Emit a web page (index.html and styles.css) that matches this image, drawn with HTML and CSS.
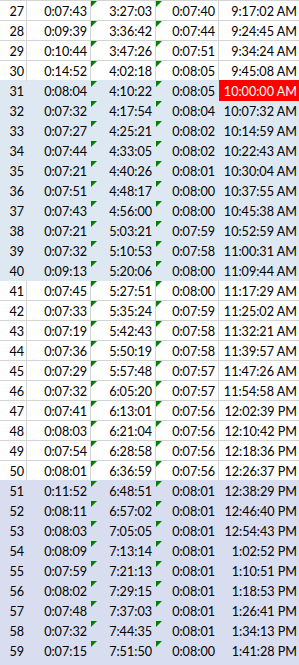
FILE: index.html
```html
<!DOCTYPE html>
<html>
<head>
<meta charset="utf-8">
<link rel="stylesheet" href="styles.css">
</head>
<body>
<div class="sheet">
<div class="row"><div class="c n">27</div><div class="c">0:07:43</div><div class="c f">3:27:03</div><div class="c f">0:07:40</div><div class="c e">9:17:02 AM</div></div>
<div class="row"><div class="c n">28</div><div class="c">0:09:39</div><div class="c f">3:36:42</div><div class="c f">0:07:44</div><div class="c e">9:24:45 AM</div></div>
<div class="row"><div class="c n">29</div><div class="c">0:10:44</div><div class="c f">3:47:26</div><div class="c f">0:07:51</div><div class="c e">9:34:24 AM</div></div>
<div class="row"><div class="c n">30</div><div class="c">0:14:52</div><div class="c f">4:02:18</div><div class="c f">0:08:05</div><div class="c e">9:45:08 AM</div></div>
<div class="row blue"><div class="c n">31</div><div class="c">0:08:04</div><div class="c f">4:10:22</div><div class="c f">0:08:05</div><div class="c e red">10:00:00 AM</div></div>
<div class="row blue"><div class="c n">32</div><div class="c">0:07:32</div><div class="c f">4:17:54</div><div class="c f">0:08:04</div><div class="c e">10:07:32 AM</div></div>
<div class="row blue"><div class="c n">33</div><div class="c">0:07:27</div><div class="c f">4:25:21</div><div class="c f">0:08:02</div><div class="c e">10:14:59 AM</div></div>
<div class="row blue"><div class="c n">34</div><div class="c">0:07:44</div><div class="c f">4:33:05</div><div class="c f">0:08:02</div><div class="c e">10:22:43 AM</div></div>
<div class="row blue"><div class="c n">35</div><div class="c">0:07:21</div><div class="c f">4:40:26</div><div class="c f">0:08:01</div><div class="c e">10:30:04 AM</div></div>
<div class="row blue"><div class="c n">36</div><div class="c">0:07:51</div><div class="c f">4:48:17</div><div class="c f">0:08:00</div><div class="c e">10:37:55 AM</div></div>
<div class="row blue"><div class="c n">37</div><div class="c">0:07:43</div><div class="c f">4:56:00</div><div class="c f">0:08:00</div><div class="c e">10:45:38 AM</div></div>
<div class="row blue"><div class="c n">38</div><div class="c">0:07:21</div><div class="c f">5:03:21</div><div class="c f">0:07:59</div><div class="c e">10:52:59 AM</div></div>
<div class="row blue"><div class="c n">39</div><div class="c">0:07:32</div><div class="c f">5:10:53</div><div class="c f">0:07:58</div><div class="c e">11:00:31 AM</div></div>
<div class="row blue"><div class="c n">40</div><div class="c">0:09:13</div><div class="c f">5:20:06</div><div class="c f">0:08:00</div><div class="c e">11:09:44 AM</div></div>
<div class="row"><div class="c n">41</div><div class="c">0:07:45</div><div class="c f">5:27:51</div><div class="c f">0:08:00</div><div class="c e">11:17:29 AM</div></div>
<div class="row"><div class="c n">42</div><div class="c">0:07:33</div><div class="c f">5:35:24</div><div class="c f">0:07:59</div><div class="c e">11:25:02 AM</div></div>
<div class="row"><div class="c n">43</div><div class="c">0:07:19</div><div class="c f">5:42:43</div><div class="c f">0:07:58</div><div class="c e">11:32:21 AM</div></div>
<div class="row"><div class="c n">44</div><div class="c">0:07:36</div><div class="c f">5:50:19</div><div class="c f">0:07:58</div><div class="c e">11:39:57 AM</div></div>
<div class="row"><div class="c n">45</div><div class="c">0:07:29</div><div class="c f">5:57:48</div><div class="c f">0:07:57</div><div class="c e">11:47:26 AM</div></div>
<div class="row"><div class="c n">46</div><div class="c">0:07:32</div><div class="c f">6:05:20</div><div class="c f">0:07:57</div><div class="c e">11:54:58 AM</div></div>
<div class="row"><div class="c n">47</div><div class="c">0:07:41</div><div class="c f">6:13:01</div><div class="c f">0:07:56</div><div class="c e">12:02:39 PM</div></div>
<div class="row"><div class="c n">48</div><div class="c">0:08:03</div><div class="c f">6:21:04</div><div class="c f">0:07:56</div><div class="c e">12:10:42 PM</div></div>
<div class="row"><div class="c n">49</div><div class="c">0:07:54</div><div class="c f">6:28:58</div><div class="c f">0:07:56</div><div class="c e">12:18:36 PM</div></div>
<div class="row"><div class="c n">50</div><div class="c">0:08:01</div><div class="c f">6:36:59</div><div class="c f">0:07:56</div><div class="c e">12:26:37 PM</div></div>
<div class="row lav"><div class="c n">51</div><div class="c">0:11:52</div><div class="c f">6:48:51</div><div class="c f">0:08:01</div><div class="c e">12:38:29 PM</div></div>
<div class="row lav"><div class="c n">52</div><div class="c">0:08:11</div><div class="c f">6:57:02</div><div class="c f">0:08:01</div><div class="c e">12:46:40 PM</div></div>
<div class="row lav"><div class="c n">53</div><div class="c">0:08:03</div><div class="c f">7:05:05</div><div class="c f">0:08:01</div><div class="c e">12:54:43 PM</div></div>
<div class="row lav"><div class="c n">54</div><div class="c">0:08:09</div><div class="c f">7:13:14</div><div class="c f">0:08:01</div><div class="c e">1:02:52 PM</div></div>
<div class="row lav"><div class="c n">55</div><div class="c">0:07:59</div><div class="c f">7:21:13</div><div class="c f">0:08:01</div><div class="c e">1:10:51 PM</div></div>
<div class="row lav"><div class="c n">56</div><div class="c">0:08:02</div><div class="c f">7:29:15</div><div class="c f">0:08:01</div><div class="c e">1:18:53 PM</div></div>
<div class="row lav"><div class="c n">57</div><div class="c">0:07:48</div><div class="c f">7:37:03</div><div class="c f">0:08:01</div><div class="c e">1:26:41 PM</div></div>
<div class="row lav"><div class="c n">58</div><div class="c">0:07:32</div><div class="c f">7:44:35</div><div class="c f">0:08:01</div><div class="c e">1:34:13 PM</div></div>
<div class="row lav"><div class="c n">59</div><div class="c">0:07:15</div><div class="c f">7:51:50</div><div class="c f">0:08:00</div><div class="c e">1:41:28 PM</div></div>
<div class="row lav tail"></div>
</div>
</body>
</html>
```
FILE: styles.css
```css
html, body {
  margin: 0;
  padding: 0;
  background: #ffffff;
}
body {
  width: 299px;
  height: 665px;
  overflow: hidden;
}
.sheet {
  display: flex;
  flex-direction: column;
  font-family: Lato, "Liberation Sans", sans-serif;
  font-size: 12.6px;
  color: #000;
}
.row {
  display: grid;
  grid-template-columns: 27px 64px 65px 63px 81px;
  height: 20px;
  box-sizing: border-box;
  border-top: 1px solid #d4d4d4;
}
.c {
  position: relative;
  box-sizing: border-box;
  border-right: 1px solid #d4d4d4;
  text-align: right;
  padding-right: 3px;
  line-height: 19px;
  padding-top: 1px;
  white-space: nowrap;
}
.c.n {
  padding-right: 2px;
}
.c.e {
  border-right: none;
}
.f::before {
  content: "";
  position: absolute;
  top: 0;
  left: 0;
  width: 0;
  height: 0;
  border-style: solid;
  border-width: 6px 6px 0 0;
  border-color: #008000 transparent transparent transparent;
}
.blue {
  background: #dde8f3;
  border-top-color: #dde8f3;
}
.blue .c {
  border-right-color: #dde8f3;
}
.lav {
  background: #d9ddf0;
  border-top-color: #d9ddf0;
}
.lav .c {
  border-right-color: #d9ddf0;
}
.blue + .row:not(.blue) {
  border-top-color: #dde8f3;
}
.red {
  background: #ff0000;
  color: #ffffff;
  margin-top: -1px;
  padding-top: 2px;
}
.tail {
  height: 10px;
}
```
